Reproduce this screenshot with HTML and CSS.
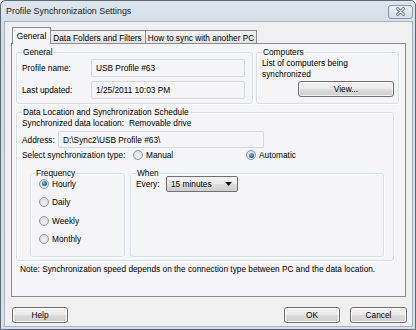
FILE: index.html
```html
<!DOCTYPE html>
<html>
<head>
<meta charset="utf-8">
<link rel="stylesheet" href="styles.css">
</head>
<body>
<div class="window">
  <div class="titlebar">
    <span class="title">Profile Synchronization Settings</span>
    <span class="close">
      <svg width="24" height="13" viewBox="0 0 24 13">
        <path d="M9 3.5 L15 9.5 M15 3.5 L9 9.5" stroke="#6c7784" stroke-width="3.2" stroke-linecap="round"/>
        <path d="M9 3.5 L15 9.5 M15 3.5 L9 9.5" stroke="#ffffff" stroke-width="1.4" stroke-linecap="round"/>
      </svg>
    </span>
  </div>
  <div class="client">
    <div class="tabs">
      <div class="tab active t1">General</div>
      <div class="tab t2">Data Folders and Filters</div>
      <div class="tab t3">How to sync with another PC</div>
    </div>
    <div class="panel">
      <div class="row-top">
        <fieldset class="group g-general">
          <legend>General</legend>
          <div class="field-row"><span class="lbl">Profile name:</span><span class="textbox">USB Profile #63</span></div>
          <div class="field-row"><span class="lbl">Last updated:</span><span class="textbox">1/25/2011 10:03 PM</span></div>
        </fieldset>
        <fieldset class="group g-computers">
          <legend>Computers</legend>
          <p class="desc">List of computers being<br>synchronized</p>
          <button class="btn view">View...</button>
        </fieldset>
      </div>
      <fieldset class="group g-location">
        <legend>Data Location and Synchronization Schedule</legend>
        <div class="loc-line"><span class="loc-label">Synchronized data location:</span><span>Removable drive</span></div>
        <div class="addr-row"><span class="addr-label">Address:</span><span class="textbox addr">D:\Sync2\USB Profile #63\</span></div>
        <div class="type-row">
          <span class="type-label">Select synchronization type:</span>
          <span class="opt manual"><span class="radio"></span>Manual</span>
          <span class="opt"><span class="radio checked"></span>Automatic</span>
        </div>
        <div class="sched">
          <fieldset class="group g-freq">
            <legend>Frequency</legend>
            <div class="freq-list">
              <span class="opt"><span class="radio checked"></span>Hourly</span>
              <span class="opt"><span class="radio"></span>Daily</span>
              <span class="opt"><span class="radio"></span>Weekly</span>
              <span class="opt"><span class="radio"></span>Monthly</span>
            </div>
          </fieldset>
          <fieldset class="group g-when">
            <legend>When</legend>
            <div class="every">
              <span class="every-label">Every:</span>
              <span class="select">15 minutes
                <svg class="arrow" width="7" height="4" viewBox="0 0 7 4"><path d="M0 0 H7 L3.5 4 Z" fill="#111"/></svg>
              </span>
            </div>
          </fieldset>
        </div>
      </fieldset>
      <p class="note">Note: Synchronization speed depends on the connection type between PC and the data location.</p>
    </div>
    <div class="buttons">
      <button class="btn help">Help</button>
      <span class="spacer"></span>
      <button class="btn ok">OK</button>
      <button class="btn cancel">Cancel</button>
    </div>
  </div>
</div>
</body>
</html>
```

FILE: styles.css
```css
* { box-sizing: border-box; }

html, body {
  margin: 0;
  padding: 0;
  background: #ffffff;
}

body {
  font-family: "Liberation Sans", Arial, sans-serif;
  font-size: 8.3px;
  color: #000;
}

.window {
  width: 416px;
  height: 330px;
  border: 1px solid #5f6975;
  border-radius: 5px 5px 0 0;
  background: linear-gradient(#dde6ef, #cfdae6 40px, #d6e0ea);
  display: flex;
  flex-direction: column;
  padding: 0 2px 2px 3px;
}

.titlebar {
  height: 20px;
  flex: none;
  display: flex;
  align-items: center;
  padding-left: 2px;
}

.title {
  font-size: 8.9px;
  color: #1b1b1b;
  flex: 1;
}

.close {
  width: 25px;
  height: 14px;
  border: 1px solid #8796a8;
  border-radius: 3px;
  background: linear-gradient(#eef2f6, #d5dde6);
  display: flex;
  align-items: center;
  justify-content: center;
  margin-top: 1px;
}

.close svg { display: block; }

.client {
  flex: 1;
  border: 1px solid #a7b3c0;
  background: #f0f0f0;
  padding: 5px 6px 0 6px;
  display: flex;
  flex-direction: column;
}

.tabs {
  height: 16px;
  display: flex;
  align-items: flex-end;
  padding-left: 1px;
  position: relative;
  z-index: 1;
}

.tab {
  height: 13px;
  border: 1px solid #898c95;
  border-bottom: none;
  background: linear-gradient(#f3f3f3, #e3e3e3);
  display: flex;
  align-items: center;
  justify-content: center;
  white-space: nowrap;
  padding-top: 1px;
}

.tab.t1 { width: 39px; }
.tab.t2 { width: 96px; margin-left: -1px; border-left: none; }
.tab.t3 { width: 112px; margin-left: -1px; }

.tab.active {
  height: 17px;
  margin-bottom: -1px;
  background: #f5f5f7;
  position: relative;
  z-index: 2;
  padding-top: 0;
  padding-bottom: 1px;
}

.panel {
  height: 254px;
  flex: none;
  border: 1px solid #898c95;
  background: #f5f5f7;
  padding: 3px 6px 0 4px;
}

.group {
  margin: 0;
  border: 1px solid #d5dfe5;
  border-radius: 3px;
  box-shadow: inset 1px 1px 0 #ffffff, 1px 1px 0 #ffffff;
  padding: 0 5px;
  min-width: 0;
}

.group legend {
  padding: 0 1px;
  line-height: 10px;
}

.row-top {
  display: flex;
  gap: 3px;
}

.g-general {
  width: 237px;
  padding-top: 2px;
  padding-bottom: 4px;
}

.field-row {
  display: flex;
  align-items: center;
  height: 18px;
}

.field-row + .field-row { margin-top: 4px; }

.lbl { width: 69px; }

.textbox {
  display: flex;
  align-items: center;
  height: 18px;
  width: 154px;
  border: 1px solid #d3d9de;
  border-radius: 2px;
  background: #f5f5f7;
  padding-left: 4px;
}

.g-computers {
  flex: 1;
  display: flex;
  flex-direction: column;
  padding-top: 1px;
}

.desc {
  margin: 0;
  line-height: 10.5px;
}

.btn {
  font-family: inherit;
  font-size: inherit;
  color: #000;
  height: 16px;
  border: 1px solid #707070;
  border-radius: 3px;
  background: linear-gradient(#f2f2f2 0%, #ebebeb 50%, #dddddd 51%, #cfcfcf 100%);
  box-shadow: inset 0 0 0 1px rgba(255,255,255,0.7);
  padding: 0;
  margin: 0;
}

.view {
  width: 96px;
  align-self: flex-end;
  margin-top: 2px;
  margin-right: -1px;
}

.g-location {
  width: 378px;
  margin-top: 3px;
  padding-top: 1px;
  padding-bottom: 3px;
}

.loc-line {
  display: flex;
  line-height: 10px;
}

.loc-label { width: 107px; }

.addr-row {
  display: flex;
  align-items: center;
  margin-top: 3px;
}

.addr-label { width: 36px; }

.textbox.addr {
  width: 206px;
  height: 17px;
}

.type-row {
  display: flex;
  align-items: center;
  height: 12px;
  margin-top: 1px;
}

.type-label { width: 111px; }

.opt {
  display: flex;
  align-items: center;
}

.opt.manual { width: 113px; }

.radio {
  width: 10px;
  height: 10px;
  border-radius: 50%;
  border: 1px solid #8f9598;
  background: radial-gradient(circle at 50% 60%, #f4f4f4 0%, #e0e0e0 60%, #cfcfcf 100%);
  margin-right: 3px;
  position: relative;
  flex: none;
}

.radio.checked::after {
  content: "";
  position: absolute;
  left: 1.5px;
  top: 1.5px;
  width: 5px;
  height: 5px;
  border-radius: 50%;
  background: radial-gradient(circle at 40% 35%, #7fc4f0 0%, #1f6fb3 55%, #0f3f73 100%);
}

.sched {
  display: flex;
  gap: 5px;
  margin-top: 7px;
  margin-left: 8px;
}

.sched .group { height: 89px; }

.g-freq {
  width: 95px;
  padding-left: 8px;
}

.g-freq legend { margin-left: -4px; }

.freq-list {
  display: flex;
  flex-direction: column;
  gap: 7.6px;
}

.freq-list .opt { height: 11px; }

.g-when {
  width: 254px;
}

.every {
  display: flex;
  align-items: center;
  margin-top: -2px;
}

.every-label { width: 30px; }

.select {
  width: 72px;
  height: 16px;
  border: 1px solid #707070;
  border-radius: 2px;
  background: linear-gradient(#f2f2f2 0%, #ebebeb 50%, #dddddd 51%, #cfcfcf 100%);
  display: flex;
  align-items: center;
  padding-left: 4px;
  padding-right: 5px;
  justify-content: space-between;
}

.arrow { display: block; }

.note {
  margin: 3px 0 0 4px;
  line-height: 10px;
}

.buttons {
  display: flex;
  margin-top: 10px;
  padding-left: 1px;
  margin-right: -1px;
  gap: 10px;
}

.spacer { flex: 1; }

.help, .ok { width: 56px; }
.cancel { width: 57px; }
```
